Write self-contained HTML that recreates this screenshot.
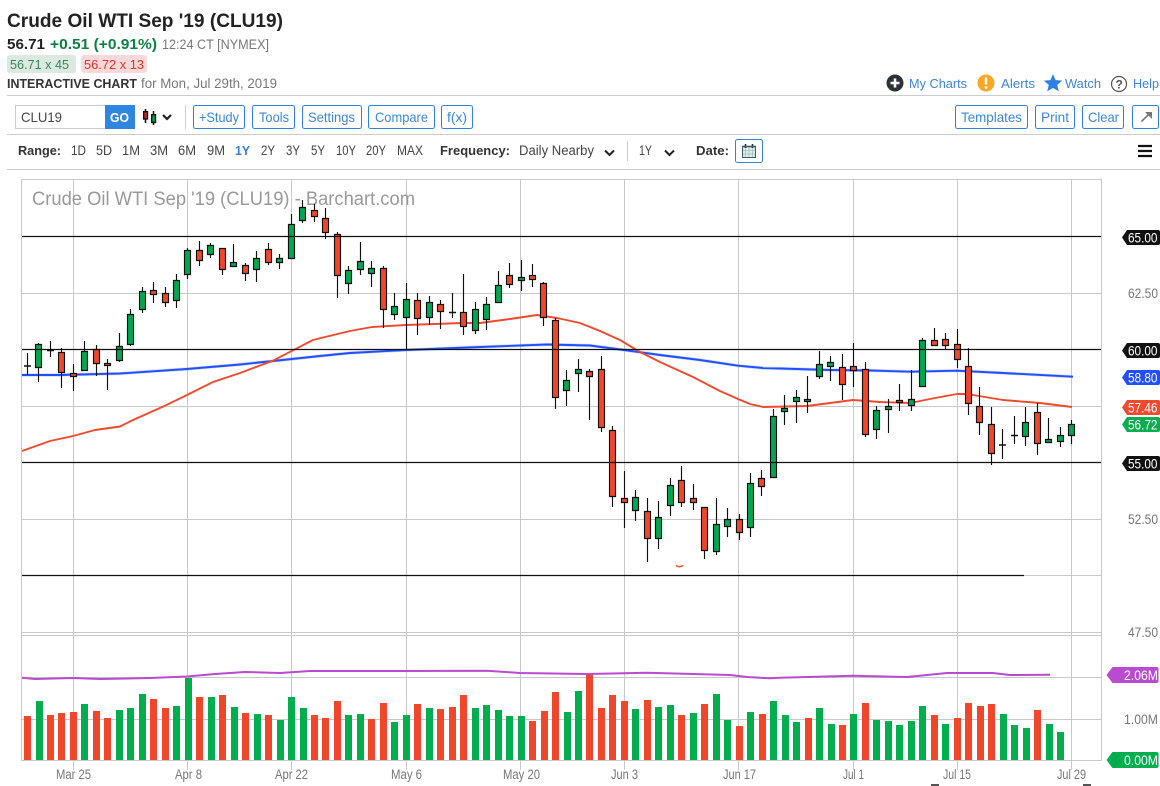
<!DOCTYPE html>
<html lang="en"><head><meta charset="utf-8"><title>Crude Oil WTI Sep '19 (CLU19)</title>
<style>
html,body{margin:0;padding:0;background:#fff;width:1160px;height:786px;overflow:hidden}
svg{display:block}
text{font-family:"Liberation Sans",sans-serif;font-size:13px}
.b{fill:#3a86df;font-size:14px}
.btn{fill:#fff;stroke:#2f82e0;stroke-width:1}
.r{fill:#444;font-size:13.5px}
.k{fill:#333;font-weight:bold;font-size:13px}
.g{fill:#777;font-size:13.5px}
.t{fill:#fff;font-size:13.5px}
</style></head><body>
<svg width="1160" height="786" viewBox="0 0 1160 786" xmlns="http://www.w3.org/2000/svg">
<rect width="1160" height="786" fill="#fff"/>
<!-- header -->
<text x="7" y="27" font-weight="bold" fill="#222" style="font-size:19.5px" textLength="276" lengthAdjust="spacingAndGlyphs">Crude Oil WTI Sep '19 (CLU19)</text>
<text x="7" y="49" font-weight="bold" fill="#222" style="font-size:15px" textLength="38" lengthAdjust="spacingAndGlyphs">56.71</text>
<text x="50" y="49" font-weight="bold" fill="#0b8043" style="font-size:15px" textLength="107" lengthAdjust="spacingAndGlyphs">+0.51 (+0.91%)</text>
<text x="162" y="49" class="g" textLength="107" lengthAdjust="spacingAndGlyphs">12:24 CT [NYMEX]</text>
<rect x="7" y="55" width="69" height="18" rx="3" fill="#dce8e0"/>
<rect x="81" y="55" width="66" height="18" rx="3" fill="#f9d9d9"/>
<text x="10" y="69" fill="#2e8b57" textLength="59" lengthAdjust="spacingAndGlyphs">56.71 x 45</text>
<text x="84" y="69" fill="#e8302a" textLength="60" lengthAdjust="spacingAndGlyphs">56.72 x 13</text>
<text x="7" y="88" class="k" textLength="130" lengthAdjust="spacingAndGlyphs">INTERACTIVE CHART</text>
<text x="141" y="88" class="g" textLength="136" lengthAdjust="spacingAndGlyphs">for Mon, Jul 29th, 2019</text>

<!-- top right links -->
<circle cx="895" cy="83" r="8.5" fill="#2d3238"/>
<path d="M895 78.5v9M890.5 83h9" stroke="#fff" stroke-width="2.6"/>
<text x="909" y="88" class="b" style="font-size:13px" textLength="58" lengthAdjust="spacingAndGlyphs">My Charts</text>
<circle cx="986" cy="83" r="8.5" fill="#f9a826"/>
<path d="M986 77.5v7" stroke="#fff" stroke-width="2.4"/><circle cx="986" cy="87.5" r="1.4" fill="#fff"/>
<text x="1001" y="88" class="b" style="font-size:13px" textLength="34" lengthAdjust="spacingAndGlyphs">Alerts</text>
<path d="M1053 74l2.6 6.1 6.6.5-5 4.3 1.6 6.5-5.8-3.5-5.8 3.5 1.6-6.5-5-4.3 6.6-.5z" fill="#2f7fe0"/>
<text x="1065" y="88" class="b" style="font-size:13px" textLength="36" lengthAdjust="spacingAndGlyphs">Watch</text>
<circle cx="1119" cy="84" r="7.5" fill="none" stroke="#555" stroke-width="1.2"/>
<text x="1115.5" y="88.5" fill="#555" font-weight="bold" style="font-size:12px">?</text>
<text x="1133" y="88" class="b" style="font-size:13px" textLength="26" lengthAdjust="spacingAndGlyphs">Help</text>

<!-- separators -->
<path d="M7 95.5H1160M7 134.5H1160M7 169.5H1160" stroke="#ccc" fill="none"/>
<path d="M185.5 105V129" stroke="#ccc"/>

<!-- toolbar -->
<rect x="15.5" y="105.5" width="90" height="23" fill="#fff" stroke="#ccc"/>
<text x="21" y="122" fill="#444" style="font-size:14px" textLength="41" lengthAdjust="spacingAndGlyphs">CLU19</text>
<rect x="105" y="105" width="30" height="24" fill="#2f86e0"/>
<text x="110" y="122" fill="#fff" font-weight="bold" textLength="19" lengthAdjust="spacingAndGlyphs">GO</text>
<path d="M145.5 109V123M153.5 111V125" stroke="#111" stroke-width="1.5"/>
<rect x="143.7" y="111.7" width="3.8" height="7.3" fill="#d7261e" stroke="#111" stroke-width="1.4"/>
<rect x="151.7" y="114.7" width="3.8" height="7.8" fill="#0aa24a" stroke="#111" stroke-width="1.4"/>
<path d="M163 115l4 4 4-4" fill="none" stroke="#222" stroke-width="2.2"/>

<rect class="btn" x="193.5" y="105.5" width="51" height="23" rx="2"/><text x="199" y="122" class="b" textLength="40" lengthAdjust="spacingAndGlyphs">+Study</text>
<rect class="btn" x="252.5" y="105.5" width="42" height="23" rx="2"/><text x="259" y="122" class="b" textLength="30" lengthAdjust="spacingAndGlyphs">Tools</text>
<rect class="btn" x="302.5" y="105.5" width="59" height="23" rx="2"/><text x="308" y="122" class="b" textLength="47" lengthAdjust="spacingAndGlyphs">Settings</text>
<rect class="btn" x="368.5" y="105.5" width="66" height="23" rx="2"/><text x="375" y="122" class="b" textLength="53" lengthAdjust="spacingAndGlyphs">Compare</text>
<rect class="btn" x="441.5" y="105.5" width="31" height="23" rx="2"/><text x="447" y="122" class="b" textLength="20" lengthAdjust="spacingAndGlyphs">f(x)</text>

<rect class="btn" x="955.5" y="105.5" width="72" height="23" rx="2"/><text x="961" y="122" class="b" textLength="61" lengthAdjust="spacingAndGlyphs">Templates</text>
<rect class="btn" x="1035.5" y="105.5" width="39" height="23" rx="2"/><text x="1041" y="122" class="b" textLength="28" lengthAdjust="spacingAndGlyphs">Print</text>
<rect class="btn" x="1082.5" y="105.5" width="41" height="23" rx="2"/><text x="1088" y="122" class="b" textLength="31" lengthAdjust="spacingAndGlyphs">Clear</text>
<rect class="btn" x="1132.5" y="105.5" width="26" height="23" rx="2"/>
<path d="M1141.5 121.5l8.5-8.5" stroke="#777" stroke-width="1.6"/><path d="M1145 112h7v7z" fill="#777"/>

<!-- range row -->
<text x="18" y="155" class="k" textLength="43" lengthAdjust="spacingAndGlyphs">Range:</text>
<text x="71" y="155" class="r" textLength="15" lengthAdjust="spacingAndGlyphs">1D</text>
<text x="96" y="155" class="r" textLength="16" lengthAdjust="spacingAndGlyphs">5D</text>
<text x="122" y="155" class="r" textLength="18" lengthAdjust="spacingAndGlyphs">1M</text>
<text x="150" y="155" class="r" textLength="18" lengthAdjust="spacingAndGlyphs">3M</text>
<text x="178" y="155" class="r" textLength="18" lengthAdjust="spacingAndGlyphs">6M</text>
<text x="207" y="155" class="r" textLength="18" lengthAdjust="spacingAndGlyphs">9M</text>
<text x="235" y="155" fill="#2f82e0" font-weight="bold" textLength="15" lengthAdjust="spacingAndGlyphs">1Y</text>
<text x="261" y="155" class="r" textLength="14" lengthAdjust="spacingAndGlyphs">2Y</text>
<text x="286" y="155" class="r" textLength="14" lengthAdjust="spacingAndGlyphs">3Y</text>
<text x="311" y="155" class="r" textLength="14" lengthAdjust="spacingAndGlyphs">5Y</text>
<text x="336" y="155" class="r" textLength="20" lengthAdjust="spacingAndGlyphs">10Y</text>
<text x="366" y="155" class="r" textLength="20" lengthAdjust="spacingAndGlyphs">20Y</text>
<text x="397" y="155" class="r" textLength="26" lengthAdjust="spacingAndGlyphs">MAX</text>
<text x="440" y="155" class="k" textLength="70" lengthAdjust="spacingAndGlyphs">Frequency:</text>
<text x="519" y="155" class="r" textLength="75" lengthAdjust="spacingAndGlyphs">Daily Nearby</text>
<path d="M605 150.5l4.5 4.5 4.5-4.5" fill="none" stroke="#222" stroke-width="2"/>
<path d="M627.5 141V161" stroke="#ccc"/>
<text x="639" y="155" class="r" textLength="13" lengthAdjust="spacingAndGlyphs">1Y</text>
<path d="M665 150.5l4.5 4.5 4.5-4.5" fill="none" stroke="#222" stroke-width="2"/>
<text x="696" y="155" class="k" textLength="33" lengthAdjust="spacingAndGlyphs">Date:</text>
<rect class="btn" x="735.5" y="139.5" width="27" height="23" rx="2"/>
<rect x="742.5" y="146.5" width="13" height="11" fill="#dfeee6" stroke="#3d5a6a"/>
<path d="M745.5 147v10M749 147v10M752.5 147v10M743 150.5h12M743 154h12" stroke="#9fc0b8" stroke-width=".7"/>
<path d="M745.5 144v4M752.5 144v4" stroke="#234" stroke-width="1.6"/>
<path d="M742 146.5h14" stroke="#3d5a6a" stroke-width="1.6"/>
<path d="M1138 146h14M1138 151h14M1138 156h14" stroke="#111" stroke-width="2.2"/>

<!-- grid -->
<g fill="none" stroke="#c8c8c8">
<path d="M21.5 179.5H1101.5V760.5H21.5Z"/>
<path d="M22 293.5H1101M22 349.5H1101M22 406.5H1101M22 462.5H1101M22 519.5H1101M22 575.5H1101M22 632.5H1101M22 635.5H1101M22 677.5H1101M22 719.5H1101"/>
<path d="M73.5 180V770M187.5 180V770M291.5 180V770M406.5 180V770M520.5 180V770M624.5 180V770M738.5 180V770M853.5 180V770M957.5 180V770M1071.5 180V770"/>
</g>

<text x="32" y="205" fill="#999" style="font-size:19px" textLength="383" lengthAdjust="spacingAndGlyphs">Crude Oil WTI Sep '19 (CLU19) - Barchart.com</text>

<!-- moving averages -->
<polyline fill="none" stroke="#1f4fff" stroke-width="3.2" stroke-opacity=".22" stroke-linejoin="round" points="22,375 60,375 120,373.5 187,369 240,364.5 273,361 320,356 350,353 406,350 480,347 547,344.5 590,345.5 624,350 660,355 700,360 738,365.7 763,368 830,370 870,370.5 911,371.7 957,370.7 1003,373 1073,376.7"/>
<polyline fill="none" stroke="#1f4fff" stroke-width="1.9" stroke-linejoin="round" points="22,375 60,375 120,373.5 187,369 240,364.5 273,361 320,356 350,353 406,350 480,347 547,344.5 590,345.5 624,350 660,355 700,360 738,365.7 763,368 830,370 870,370.5 911,371.7 957,370.7 1003,373 1073,376.7"/>
<polyline fill="none" stroke="#f0492e" stroke-width="1.9" stroke-linejoin="round" points="22,451 50,441 73,436 95,430 120,426.5 133,420 165,405.7 187,395 213,382 240,373 273,360.7 300,346.7 313,340 325,337 350,331 372,327 406,325 463,323 480,323 510,319 537,315 557,318 580,323 600,331 620,340 640,352 660,362 693,377 720,391 738,399 750,404 763,407 807,406 830,403 853,400 880,402 910,403 935,398 957,394 967,394 985,397 1003,400 1040,403 1072,407"/>

<!-- candles -->
<path stroke="#111" stroke-width="1.15" fill="none" d="M27.5 353V375M38.5 343V382M50.5 341V357M61.5 348V388M73.5 364V391M84.5 341V371M96.5 345V376M107.5 359V390M119.5 333V362M130.5 309V346M142.5 287V313M153.5 282V303M165.5 287V307M176.5 274V308M187.5 248V279M199.5 241V266M210.5 243V258M222.5 248V275M233.5 244V267M245.5 263V281M256.5 251V282M268.5 243V265M279.5 254V269M291.5 214V258M302.5 200V223M314.5 204V222M325.5 208V239M337.5 232V298M348.5 266V294M360.5 242V275M371.5 261V287M383.5 266V328M394.5 293V320M406.5 283V349M417.5 293V335M429.5 296V325M440.5 300V329M452.5 293V318M463.5 274V335M475.5 302V334M486.5 297V330M498.5 271V302M509.5 263V288M521.5 260V291M532.5 264V287M543.5 282V326M555.5 318V409M566.5 370V406M578.5 359V392M589.5 369V420M601.5 356V432M612.5 426V507M624.5 471V528M635.5 490V521M647.5 498V562M658.5 501V549M670.5 478V516M681.5 466V507M693.5 484V510M704.5 507V559M716.5 498V555M727.5 508V537M739.5 514V540M750.5 473V537M761.5 470V496M773.5 409V477M784.5 395V425M796.5 390V423M807.5 376V413M819.5 351V379M830.5 356V381M842.5 354V400M853.5 343V387M865.5 362V437M876.5 406V439M888.5 399V433M899.5 384V411M911.5 370V411M922.5 338V386M934.5 328V345M945.5 333V350M957.5 329V368M968.5 348V415M979.5 387V435M991.5 407V465M1002.5 429V459M1014.5 416V444M1025.5 407V446M1037.5 403V455M1048.5 418V443M1060.5 427V447M1071.5 420V444"/>
<path stroke="#111" stroke-width="1.6" fill="none" d="M24 366H31M47 350.5H54M449 312.5H456M999 445H1006M1011 435.5H1018"/>
<path stroke="#111" stroke-width="1.15" fill="#00a651" d="M35.5 344.5h6v23h-6zM81.5 351.5h6v19h-6zM116.5 346.5h6v14h-6zM127.5 314.5h6v30h-6zM139.5 291.5h6v18h-6zM173.5 280.5h6v20h-6zM184.5 250.5h6v24h-6zM207.5 245.5h6v9h-6zM230.5 262.5h6v4h-6zM253.5 258.5h6v11h-6zM276.5 258.5h6v4h-6zM288.5 224.5h6v34h-6zM299.5 207.5h6v13h-6zM345.5 270.5h6v13h-6zM357.5 261.5h6v8h-6zM368.5 268.5h6v5h-6zM391.5 306.5h6v8h-6zM403.5 299.5h6v18h-6zM426.5 302.5h6v15h-6zM472.5 309.5h6v21h-6zM483.5 304.5h6v15h-6zM495.5 285.5h6v17h-6zM518.5 277.5h6v3h-6zM563.5 380.5h6v10h-6zM575.5 369.5h6v4h-6zM632.5 497.5h6v13h-6zM655.5 517.5h6v21h-6zM667.5 485.5h6v20h-6zM713.5 524.5h6v27h-6zM724.5 519.5h6v7h-6zM747.5 483.5h6v44h-6zM770.5 416.5h6v61h-6zM781.5 408.5h6v3h-6zM793.5 397.5h6v4h-6zM804.5 399.5h6v2h-6zM816.5 364.5h6v12h-6zM827.5 362.5h6v4h-6zM873.5 410.5h6v19h-6zM885.5 406.5h6v3h-6zM908.5 399.5h6v6h-6zM919.5 340.5h6v46h-6zM1022.5 422.5h6v14h-6zM1045.5 439.5h6v3h-6zM1057.5 435.5h6v6h-6zM1068.5 424.5h6v11h-6z"/>
<path stroke="#111" stroke-width="1.15" fill="#f0462a" d="M58.5 352.5h6v20h-6zM70.5 373.5h6v3h-6zM93.5 349.5h6v14h-6zM104.5 363.5h6v2h-6zM150.5 290.5h6v4h-6zM162.5 293.5h6v9h-6zM196.5 250.5h6v10h-6zM219.5 248.5h6v21h-6zM242.5 265.5h6v8h-6zM265.5 249.5h6v13h-6zM311.5 210.5h6v6h-6zM322.5 218.5h6v14h-6zM334.5 234.5h6v41h-6zM380.5 268.5h6v41h-6zM414.5 300.5h6v18h-6zM437.5 304.5h6v7h-6zM460.5 312.5h6v14h-6zM506.5 275.5h6v9h-6zM529.5 275.5h6v4h-6zM540.5 283.5h6v34h-6zM552.5 320.5h6v77h-6zM586.5 371.5h6v5h-6zM598.5 369.5h6v58h-6zM609.5 430.5h6v66h-6zM621.5 498.5h6v4h-6zM644.5 511.5h6v27h-6zM678.5 480.5h6v22h-6zM690.5 498.5h6v4h-6zM701.5 507.5h6v43h-6zM736.5 519.5h6v13h-6zM758.5 478.5h6v8h-6zM839.5 367.5h6v17h-6zM850.5 366.5h6v4h-6zM862.5 369.5h6v65h-6zM896.5 400.5h6v2h-6zM931.5 340.5h6v5h-6zM942.5 339.5h6v6h-6zM954.5 344.5h6v15h-6zM965.5 366.5h6v37h-6zM976.5 406.5h6v16h-6zM988.5 424.5h6v29h-6zM1034.5 412.5h6v31h-6z"/>

<!-- level lines -->
<path stroke="#111" stroke-width="1.3" fill="none" d="M22 236.5H1101M22 349.5H1101M22 462.5H1101M22 575.5H1024"/>
<path d="M676 565.5q3.5 2.5 7 0" fill="none" stroke="#f0462a" stroke-width="1.4"/>

<!-- volume bars -->
<path fill="#f0462a" d="M24 716h7V760h-7zM47 715h7V760h-7zM58 713h7V760h-7zM70 712h7V760h-7zM93 711h7V760h-7zM104 718h7V760h-7zM150 699h7V760h-7zM162 708h7V760h-7zM196 697h7V760h-7zM219 695h7V760h-7zM242 713h7V760h-7zM265 715h7V760h-7zM311 715h7V760h-7zM322 718h7V760h-7zM334 701h7V760h-7zM368 719h7V760h-7zM380 703h7V760h-7zM414 704h7V760h-7zM437 709h7V760h-7zM449 707h7V760h-7zM460 695h7V760h-7zM529 721h7V760h-7zM541 711h7V760h-7zM552 692h7V760h-7zM586 674h7V760h-7zM598 708h7V760h-7zM609 695h7V760h-7zM621 701h7V760h-7zM644 700h7V760h-7zM678 715h7V760h-7zM701 704h7V760h-7zM736 726h7V760h-7zM759 714h7V760h-7zM805 718h7V760h-7zM839 725h7V760h-7zM862 703h7V760h-7zM931 715h7V760h-7zM954 718h7V760h-7zM965 703h7V760h-7zM977 706h7V760h-7zM988 704h7V760h-7zM1034 710h7V760h-7z"/>
<path fill="#00ae4d" d="M36 701h7V760h-7zM81 704h7V760h-7zM116 710h7V760h-7zM127 708h7V760h-7zM139 694h7V760h-7zM173 706h7V760h-7zM185 678h7V760h-7zM208 697h7V760h-7zM231 707h7V760h-7zM254 714h7V760h-7zM277 720h7V760h-7zM288 697h7V760h-7zM300 708h7V760h-7zM345 715h7V760h-7zM357 714h7V760h-7zM391 722h7V760h-7zM403 715h7V760h-7zM426 708h7V760h-7zM472 708h7V760h-7zM483 705h7V760h-7zM495 710h7V760h-7zM506 716h7V760h-7zM518 716h7V760h-7zM564 712h7V760h-7zM575 691h7V760h-7zM632 709h7V760h-7zM655 707h7V760h-7zM667 705h7V760h-7zM690 713h7V760h-7zM713 694h7V760h-7zM724 720h7V760h-7zM747 712h7V760h-7zM770 701h7V760h-7zM782 715h7V760h-7zM793 722h7V760h-7zM816 708h7V760h-7zM828 724h7V760h-7zM850 714h7V760h-7zM873 720h7V760h-7zM885 721h7V760h-7zM896 725h7V760h-7zM908 721h7V760h-7zM919 706h7V760h-7zM942 724h7V760h-7zM1000 714h7V760h-7zM1011 725h7V760h-7zM1023 728h7V760h-7zM1046 724h7V760h-7zM1057 732h7V760h-7z"/>
<polyline fill="none" stroke="#b94bd0" stroke-width="2" stroke-linejoin="round" points="22,677.7 35,679 73,678 100,679 150,678 187,676.5 215,674 245,672 280,673 310,671 400,671 487,670.7 520,673 587,674 647,672.7 730,675 747,677 770,678.3 780,677.7 853,675.7 907,677 947,673 993,673 1010,675 1050,674.7"/>

<!-- axis labels -->
<text x="1128" y="298" class="g" textLength="30" lengthAdjust="spacingAndGlyphs">62.50</text>
<text x="1128" y="524" class="g" textLength="30" lengthAdjust="spacingAndGlyphs">52.50</text>
<text x="1128" y="637" class="g" textLength="30" lengthAdjust="spacingAndGlyphs">47.50</text>
<text x="1124" y="724" class="g" textLength="34" lengthAdjust="spacingAndGlyphs">1.00M</text>

<!-- price tags -->
<path fill="#111" d="M1122 237.5l5-7.5h31q2 0 2 2v11q0 2-2 2h-31z"/><text class="t" x="1128" y="242.5" textLength="29.5" lengthAdjust="spacingAndGlyphs">65.00</text>
<path fill="#111" d="M1122 350.5l5-7.5h31q2 0 2 2v11q0 2-2 2h-31z"/><text class="t" x="1128" y="355.5" textLength="29.5" lengthAdjust="spacingAndGlyphs">60.00</text>
<path fill="#1f4fff" d="M1122 377.5l5-7.5h31q2 0 2 2v11q0 2-2 2h-31z"/><text class="t" x="1128" y="382.5" textLength="29.5" lengthAdjust="spacingAndGlyphs">58.80</text>
<path fill="#f0492e" d="M1122 407.5l5-7.5h31q2 0 2 2v11q0 2-2 2h-31z"/><text class="t" x="1128" y="412.5" textLength="29.5" lengthAdjust="spacingAndGlyphs">57.46</text>
<path fill="#0aad4f" d="M1122 424.5l5-7.5h31q2 0 2 2v11q0 2-2 2h-31z"/><text class="t" x="1128" y="429.5" textLength="29.5" lengthAdjust="spacingAndGlyphs">56.72</text>
<path fill="#111" d="M1122 463.5l5-7.5h31q2 0 2 2v11q0 2-2 2h-31z"/><text class="t" x="1128" y="468.5" textLength="29.5" lengthAdjust="spacingAndGlyphs">55.00</text>
<path fill="#b94bd0" d="M1106.5 675l6-8h44q2 0 2 2v12q0 2-2 2h-44z"/><text class="t" x="1124" y="680" textLength="34" lengthAdjust="spacingAndGlyphs">2.06M</text>
<path fill="#00ae4d" d="M1106.5 760l6-8h44q2 0 2 2v12q0 2-2 2h-44z"/><text class="t" x="1124" y="765" textLength="34" lengthAdjust="spacingAndGlyphs">0.00M</text>

<!-- dates -->
<text x="56" y="779" class="g" textLength="35" lengthAdjust="spacingAndGlyphs">Mar 25</text>
<text x="175" y="779" class="g" textLength="27" lengthAdjust="spacingAndGlyphs">Apr 8</text>
<text x="275" y="779" class="g" textLength="33" lengthAdjust="spacingAndGlyphs">Apr 22</text>
<text x="391" y="779" class="g" textLength="31" lengthAdjust="spacingAndGlyphs">May 6</text>
<text x="503" y="779" class="g" textLength="37" lengthAdjust="spacingAndGlyphs">May 20</text>
<text x="611" y="779" class="g" textLength="27" lengthAdjust="spacingAndGlyphs">Jun 3</text>
<text x="723" y="779" class="g" textLength="33" lengthAdjust="spacingAndGlyphs">Jun 17</text>
<text x="843" y="779" class="g" textLength="21" lengthAdjust="spacingAndGlyphs">Jul 1</text>
<text x="943" y="779" class="g" textLength="28" lengthAdjust="spacingAndGlyphs">Jul 15</text>
<text x="1057" y="779" class="g" textLength="29" lengthAdjust="spacingAndGlyphs">Jul 29</text>
<rect x="931" y="784" width="8" height="2" fill="#555"/>
<rect x="1083" y="784" width="8" height="2" fill="#555"/>
</svg>
</body></html>
